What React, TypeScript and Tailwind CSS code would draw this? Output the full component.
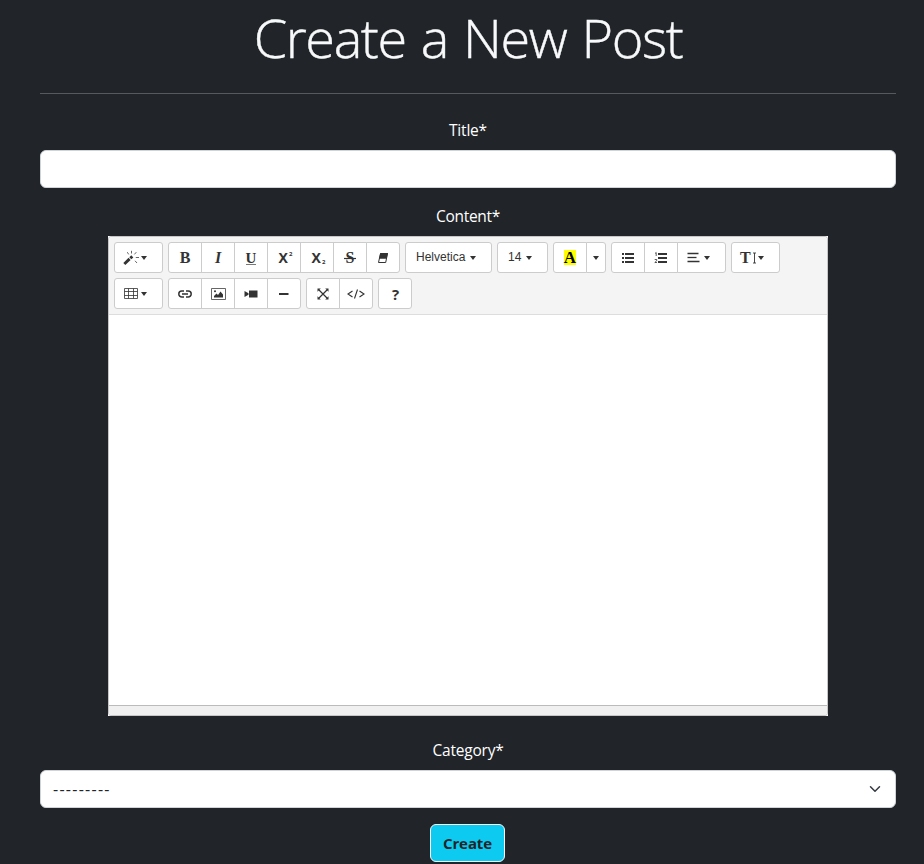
import type { ReactNode } from 'react';

const label = "font-['Open_Sans','Noto_Sans',sans-serif] text-[15.5px] leading-6 text-white";

function Group({ children }: { children: ReactNode }) {
  return <div className="flex h-[31px]">{children}</div>;
}

function Btn({ w = 'w-[34px]', children }: { w?: string; children: ReactNode }) {
  return (
    <button
      type="button"
      className={`${w} -ml-px flex h-[31px] items-center justify-center border border-[#ccc] bg-white text-[#333] first:ml-0 first:rounded-l-[3px] last:rounded-r-[3px]`}
    >
      {children}
    </button>
  );
}

function MenuBtn({ w = 'w-[49px]', pad = 'pl-[9px]', children }: { w?: string; pad?: string; children: ReactNode }) {
  return (
    <button
      type="button"
      className={`${w} ${pad} -ml-px flex h-[31px] items-center border border-[#ccc] bg-white text-[#333] first:ml-0 first:rounded-l-[3px] last:rounded-r-[3px]`}
    >
      {children}
    </button>
  );
}

function Caret({ className = '' }: { className?: string }) {
  return (
    <svg className={className} width="6" height="4" viewBox="0 0 6 4">
      <path d="M0 0h6L3 4z" fill="#333" />
    </svg>
  );
}

function Icon({ w = 16, h = 14, children }: { w?: number; h?: number; children: ReactNode }) {
  return (
    <svg width={w} height={h} viewBox={`0 0 ${w} ${h}`} fill="none" stroke="#333" className="shrink-0">
      {children}
    </svg>
  );
}

const serif = "font-['Liberation_Serif',serif] text-[16px] leading-4 font-bold";
const sans = "font-['Open_Sans',sans-serif] text-[14px] leading-4 font-bold";
const menu = "font-['Liberation_Sans',sans-serif] text-[12px] leading-4 -mt-[2px]";

function Toolbar() {
  return (
    <div className="flex h-[78px] flex-wrap content-start gap-[5px] rounded-t-[3px] border-b border-[#ddd] bg-[#f4f4f4] p-[5px]">
      <Group>
        <MenuBtn pad="pl-[8px]">
          <Icon w={16} h={16}>
            <path d="M1.3 14 6.6 8.9" strokeWidth="2.9" />
            <path d="M7.3 8.3 9.3 6.4" strokeWidth="2.9" />
            <path d="M4.3 2.2 5.7 4.4M8.5 .8v2.7M13.3 2.2l-1.9 2.2M12.8 7.5H16M12 10.8l2 2.2" strokeWidth="1" strokeOpacity=".75" />
          </Icon>
          <Caret className="ml-[2px]" />
        </MenuBtn>
      </Group>
      <Group>
        <Btn><span className={serif}>B</span></Btn>
        <Btn><span className={`${serif} italic`}>I</span></Btn>
        <Btn>
          <span className="h-[15px] border-b border-[#777] font-['Liberation_Serif',serif] text-[15px] leading-4 font-bold">U</span>
        </Btn>
        <Btn>
          <span className={`${sans} flex pl-[3px]`}>X<span className="-mt-[4px] ml-px text-[6px]">2</span></span>
        </Btn>
        <Btn>
          <span className={`${sans} flex h-4 pl-[3px]`}>X<span className="mt-[8px] ml-px h-2 text-[6px] leading-2">2</span></span>
        </Btn>
        <Btn>
          <Icon w={14} h={16}>
            <text x="2.5" y="13.2" fill="#333" stroke="none" className="font-['Liberation_Serif',serif] text-[16px] font-bold">S</text>
            <path d="M1 8.5h12" strokeWidth="1.2" />
          </Icon>
        </Btn>
        <Btn>
          <Icon w={12} h={12}>
            <path d="M3.5 1.5h7L8.7 10.5H1.5z" fill="#fff" strokeWidth="1" />
            <path d="M3.3 1h7.7L9.6 6.8H2z" fill="#333" stroke="none" />
          </Icon>
        </Btn>
      </Group>
      <Group>
        <MenuBtn w="w-[87px]" pad="pl-[10px]"><span className={menu}>Helvetica</span><Caret className="ml-[5px]" /></MenuBtn>
      </Group>
      <Group>
        <MenuBtn w="w-[51px]" pad="pl-[10px]"><span className={menu}>14</span><Caret className="ml-[5px]" /></MenuBtn>
      </Group>
      <Group>
        <Btn>
          <span className="flex h-[15px] w-3 items-center justify-center bg-[#ff0] pt-px font-['Liberation_Serif',serif] text-[17px] leading-4 font-bold text-black">A</span>
        </Btn>
        <Btn w="w-[20px]"><Caret /></Btn>
      </Group>
      <Group>
        <Btn>
          <Icon>
            <path d="M2 3h2M2 7h2M2 11h2M5 3h9M5 7h9M5 11h9" strokeWidth="2" />
          </Icon>
        </Btn>
        <Btn>
          <Icon>
            <path d="M5 3h9M5 7h9M5 11h9" strokeWidth="2" />
            <path d="M2 2.5 3.2 1.5V5M1.7 8.5h2v1.2L1.8 11.5H4" strokeWidth=".8" />
          </Icon>
        </Btn>
        <MenuBtn>
          <Icon w={13} h={11}>
            <path d="M.5 1.5h11M.5 9.5h12" strokeWidth="1.3" />
            <path d="M.5 5.5h9" strokeWidth="1.3" />
          </Icon>
          <Caret className="ml-[4px]" />
        </MenuBtn>
      </Group>
      <Group>
        <MenuBtn pad="pl-[8px]">
          <span className="font-['Liberation_Serif',serif] text-[16px] leading-4 font-bold">T</span>
          <Icon w={6} h={12}>
            <path d="M3.5 1v10M2 1h3M2 11h3" strokeWidth=".9" />
          </Icon>
          <Caret className="ml-[1px]" />
        </MenuBtn>
      </Group>
      <Group>
        <MenuBtn>
          <Icon w={14} h={12}>
            <path d="M.5 .5h13v10H.5zM.5 3.5h13M.5 7.5h13M4.5 .5v10M9.5 .5v10" strokeWidth="1" strokeOpacity=".8" />
          </Icon>
          <Caret className="ml-[3px]" />
        </MenuBtn>
      </Group>
      <Group>
        <Btn>
          <Icon w={14} h={8}>
            <path d="M6 1H3.8a3 3 0 0 0 0 6H6M8 1h2.2a3 3 0 0 1 0 6H8M4 4h6" strokeWidth="1.5" />
          </Icon>
        </Btn>
        <Btn>
          <Icon w={15} h={12}>
            <path d="M.5 .5h14v11H.5z" strokeWidth="1" strokeOpacity=".75" />
            <path d="M3 9.5V8l2.5-2.5L7 7l2.5-3.5L12 6.5v3z" fill="#333" stroke="none" />
            <circle cx="4" cy="3.3" r="1" fill="#333" stroke="none" />
          </Icon>
        </Btn>
        <Btn>
          <Icon w={14} h={8}>
            <path d="M5 .5h8.5v7H5zM.5 1 4.5 3.3v1.4L.5 7z" fill="#333" stroke="none" />
          </Icon>
        </Btn>
        <Btn>
          <Icon w={10} h={2}><path d="M0 1h9.5" strokeWidth="2" /></Icon>
        </Btn>
      </Group>
      <Group>
        <Btn>
          <Icon w={12} h={12}>
            <path d="M2 2l8 8M10 2l-8 8" strokeWidth="1.2" />
            <path d="M.5 .5h3.3L.5 3.8zM11.5 .5v3.3L8.2 .5zM.5 11.5V8.2l3.3 3.3zM11.5 11.5H8.2l3.3-3.3z" fill="#333" stroke="none" />
          </Icon>
        </Btn>
        <Btn>
          <Icon w={18} h={12}>
            <path d="M5.5 3 1 6l4.5 3M12.5 3 17 6l-4.5 3M10.5 1.5l-3 9" strokeWidth="1.1" />
          </Icon>
        </Btn>
      </Group>
      <Group>
        <Btn><span className={`${sans} pl-px text-[15px]`}>?</span></Btn>
      </Group>
    </div>
  );
}

export default function App() {
  return (
    <main className="flex h-[864px] flex-col items-center overflow-hidden bg-[#212529] pr-7 pl-10">
      <h1 className="mt-[4px] h-[67px] text-center font-['Open_Sans',sans-serif] text-[54px] leading-[67px] font-light tracking-[-1.4px] [word-spacing:2.4px] whitespace-nowrap text-[#f8f9fa] [-webkit-text-stroke:0.4px_#f8f9fa]">
        Create a New Post
      </h1>
      <hr className="mt-[22px] w-full border-t border-[#565a5e]" />
      <label className={`${label} mt-[24px] tracking-[-0.2px]`}>Title*</label>
      <input className="mt-2 h-[38px] w-full rounded-md border border-[#ced4da] bg-white px-3 text-[#212529] outline-none" />
      <label className={`${label} mt-4 tracking-[-0.3px]`}>Content*</label>
      <section className="mt-2 h-[480px] w-[720px] bg-white">
        <div className="flex h-full flex-col rounded-[3px] border border-[#c6c6c6] bg-white">
          <Toolbar />
          <div className="flex-1 bg-white" />
          <div className="h-[10px] rounded-b-[3px] border-t border-[#bbb] bg-[#f0f0f0]" />
        </div>
      </section>
      <label className={`${label} mt-[22px] tracking-[-0.2px]`}>Category*</label>
      <div className="mt-2 flex h-[38px] w-full shrink-0 items-center justify-between rounded-md border border-[#ced4da] bg-white pr-[14px] pl-3 font-['Open_Sans',sans-serif] text-base text-[#212529]">
        <span className="tracking-[1.27px]">---------</span>
        <svg width="12" height="12" viewBox="0 0 16 16" fill="none" stroke="#343a40" strokeWidth="2" strokeLinecap="round" strokeLinejoin="round">
          <path d="m2 5 6 6 6-6" />
        </svg>
      </div>
      <button type="button" className="mt-4 mr-px h-[38px] w-[75px] shrink-0 rounded-md border border-[#f8f9fa] bg-[#0dcaf0] font-['Open_Sans',sans-serif] text-[15px] font-bold tracking-[-0.1px] text-[#212529]">
        Create
      </button>
    </main>
  );
}
